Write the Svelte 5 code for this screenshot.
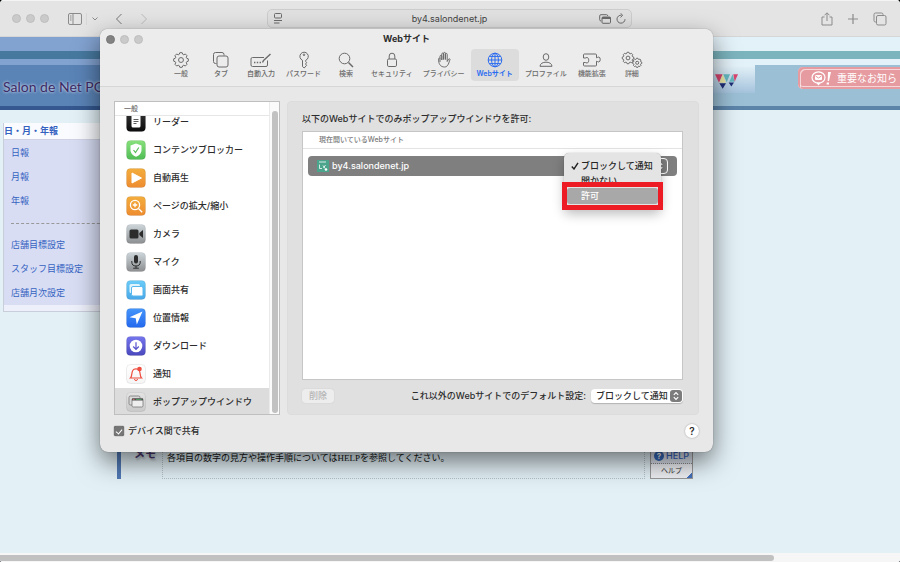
<script>
  function gear(cx, cy, r, teeth) {
    let pts = [];
    for (let i = 0; i < teeth; i++) {
      const a = (Math.PI * 2 * i) / teeth - Math.PI / 2;
      const s = Math.PI / teeth;
      for (const [off, rad] of [[-0.8, 0.8], [-0.4, 1], [0.4, 1], [0.8, 0.8]]) {
        pts.push((cx + Math.cos(a + s * off) * r * rad).toFixed(2) + ' ' + (cy + Math.sin(a + s * off) * r * rad).toFixed(2));
      }
    }
    return `<path d="M${pts.join('L')}Z"/><circle cx="${cx}" cy="${cy}" r="${r * 0.33}"/>`;
  }

  const tabs = [
    { label: '一般', w: 18, icon: gear(9, 9, 7.4, 8) },
    { label: 'タブ', w: 18, icon: '<path d="M4.5 12.5H3.5A2 2 0 0 1 1.5 10.500V3.500A2 2 0 0 1 3.500 1.500H10A2 2 0 0 1 12 3.500V4.500"/><rect x="5" y="5" width="11" height="11" rx="2"/>' },
    { label: '自動入力', w: 22, icon: '<path d="M14 6.500H2.500A1.500 1.500 0 0 0 1 8V14A1.500 1.500 0 0 0 2.500 15.500H16A1.500 1.500 0 0 0 17.500 14V9.500"/><path d="M12.500 11.500L13.500 9.500L20.500 3" stroke-width="1.400"/><path d="M4 11.500H12" stroke-dasharray="1.400 1.400" stroke-width="1.500"/>' },
    { label: 'パスワード', w: 18, icon: '<path d="M7.500 9.300A4.200 4.200 0 1 1 10.700 9.300V10.500L11.600 11.700L10.500 13L11.600 14.300L9.200 17L7.500 15.500Z"/><circle cx="9" cy="3.800" r=".8"/>' },
    { label: '検索', w: 18, icon: '<circle cx="7.500" cy="7.500" r="5.300"/><path d="M11.500 11.500L16 16" stroke-width="1.500"/>' },
    { label: 'セキュリティ', w: 18, icon: '<rect x="4.500" y="8" width="9" height="7.500" rx="1.300"/><path d="M6.200 8V5A2.800 2.800 0 0 1 11.800 5V8"/>' },
    { label: 'プライバシー', w: 18, icon: '<path d="M5 11V5.300A.9.9 0 0 1 6.800 5.300V9V3A.9.9 0 0 1 8.600 3V8.500V2.300A.9.9 0 0 1 10.400 2.300V8.500V3.300A.9.9 0 0 1 12.200 3.300V10.500L13.600 8.200C14.300 7.300 15.300 7.800 14.900 8.800C14 11 13.300 16 9.500 16C6 16 3.900 13.500 3.700 10V7.500A.7.7 0 0 1 5 7.500"/>' },
    { label: 'Webサイト', w: 18, active: true, icon: '<circle cx="9" cy="9" r="6.800"/><ellipse cx="9" cy="9" rx="3.400" ry="6.800"/><path d="M9 2.200V15.800M2.200 9H15.800M3.400 5.400H14.600M3.400 12.600H14.600"/>' },
    { label: 'プロファイル', w: 18, icon: '<ellipse cx="9" cy="6" rx="2.800" ry="3.300"/><path d="M3 15.300C3 9.800 15 9.800 15 15.300Z"/>' },
    { label: '機能拡張', w: 20, icon: '<path d="M2.500 3H13.500A1 1 0 0 1 14.500 4V6.800C15.500 6.800 15.700 6 16.800 6C18.700 6 18.700 11 16.800 11C15.700 11 15.500 10.200 14.500 10.200V14A1 1 0 0 1 13.500 15H2.500A1 1 0 0 1 1.500 14V11.500H3.300C4 11.500 4 12 5 12C7.300 12 7.300 6.500 5 6.500C4 6.500 4 7 3.300 7H1.500V4A1 1 0 0 1 2.500 3Z"/>' },
    { label: '詳細', w: 22, icon: gear(7, 7, 5.8, 8) + gear(16.2, 11.8, 4.6, 8) },
  ];

  const items = [
    { label: 'リーダー', c1: '#333', c2: '#0c0c0c', icon: '<rect x="5" y="2" width="9" height="13" rx="1.500" fill="#fff"/><path d="M7 7H12M7 9H12M7 11H10" stroke="#333" stroke-width=".8"/>' },
    { label: 'コンテンツブロッカー', c1: '#88e07c', c2: '#50bd54', icon: '<path d="M9.500 3L15 5V9.500C15 13 12.500 15 9.500 16.300C6.500 15 4 13 4 9.500V5Z" fill="#fff"/><path d="M7 9.500L9 12L12.300 7" fill="none" stroke="#55bd58" stroke-width="1.200"/>' },
    { label: '自動再生', c1: '#f3ad3c', c2: '#ee8c30', icon: '<path d="M5.500 4.500L15 9.500L5.500 14.500Z" fill="#fff" stroke="#fff" stroke-linejoin="round"/>' },
    { label: 'ページの拡大/縮小', c1: '#f3ad3c', c2: '#ee8c30', icon: '<g fill="none" stroke="#fff" stroke-width="1.300"><circle cx="8.500" cy="8.500" r="4.600"/><path d="M12 12L15.700 15.700M8.500 6.300V10.700M6.300 8.500H10.700"/></g>' },
    { label: 'カメラ', c1: '#cdd6db', c2: '#8c8e90', icon: '<rect x="3" y="5" width="9" height="9" rx="1.500" fill="#2c2c2c"/><path d="M12.800 8.500L16.500 5.500V13.500L12.800 10.500Z" fill="#2c2c2c"/>' },
    { label: 'マイク', c1: '#cdd6db', c2: '#8c8e90', icon: '<rect x="7.500" y="2.500" width="4" height="8.500" rx="2" fill="#2c2c2c"/><path d="M5.300 8.500V9.500A4.200 4 0 0 0 13.700 9.500V8.500M9.500 13.500V15.700M6.700 15.700H12.300" fill="none" stroke="#2c2c2c"/>' },
    { label: '画面共有', c1: '#6accf8', c2: '#48a8e8', icon: '<rect x="3" y="3.500" width="10.500" height="9" rx="1.500" fill="#dff3fd"/><rect x="5" y="6" width="11.500" height="9.500" rx="1.500" fill="#fff" stroke="#56b6ee"/>' },
    { label: '位置情報', c1: '#4595fa', c2: '#2368ee', icon: '<path d="M16 3L10.300 16L9.200 9.800L3 8.700Z" fill="#fff"/>' },
    { label: 'ダウンロード', c1: '#7575ee', c2: '#4a48bc', icon: '<circle cx="9.500" cy="9.500" r="6.300" fill="#fff"/><path d="M9.500 5.800V12.500M6.700 10L9.500 12.800L12.300 10" fill="none" stroke="#5552cc" stroke-width="1.200"/>' },
    { label: '通知', c1: '#ffffff', c2: '#f5f5f5', icon: '<path d="M4 13.500H15C13.300 12 14 8 12.800 6C11.500 3.700 7.500 3.700 6.200 6C5 8 5.700 12 4 13.500Z" fill="none" stroke="#ee4d3f" stroke-width="1.200"/><path d="M8 14.500A1.500 1.500 0 0 0 11 14.500" fill="none" stroke="#ee4d3f"/><circle cx="13" cy="4.500" r="2.300" fill="#ee4d3f"/>' },
    { label: 'ポップアップウインドウ', selected: true, c1: '#e3e3e3', c2: '#c9c9c9', icon: '<rect x="2.500" y="3.500" width="11" height="9" rx="1.500" fill="#d9d9d9" stroke="#777" stroke-width=".8"/><rect x="5.500" y="6" width="11" height="8.500" rx="1.200" fill="#eee" stroke="#777" stroke-width=".8"/><path d="M5.500 7H16.500" stroke="#4f4f4f" stroke-width="2"/><path d="M6.300 7H8" stroke="#c66" /><path d="M9.500 7H15" stroke="#4f9662"/>' },
  ];

  const menu = ['日報', '月報', '年報', '-', '店舗目標設定', 'スタッフ目標設定', '店舗月次設定'];
  let share = $state(true);
  let rule = $state('ブロックして通知');
</script>

{#snippet updown()}
  <svg class="updown" viewBox="0 0 12 12" aria-hidden="true">
    <rect width="12" height="12" rx="3" fill="#7c7c7c" />
    <path d="M3.800 4.800L6 2.600L8.200 4.800M3.800 7.200L6 9.400L8.200 7.200" fill="none" stroke="#fff" stroke-width="1.200" />
  </svg>
{/snippet}

<div class="browser">
  <header class="bar">
    <div class="left">
      <span class="lights"><i></i><i></i><i></i></span>
      <button class="side" aria-label="サイドバー">
        <svg width="14" height="12" viewBox="0 0 14 12"><rect x=".5" y=".5" width="13" height="11" rx="1.500" /><path d="M5 .5V11.500M2 3H3.500M2 5H3.500M2 7H3.500" /></svg>
      </button>
      <button class="more" aria-label="タブグループ"><svg width="6" height="4" viewBox="0 0 6 4"><path d="M.5 .5L3 3L5.500 .5" /></svg></button>
      <button class="back" aria-label="戻る"><svg width="8" height="12" viewBox="0 0 8 12"><path d="M6.500 1L1.500 6L6.500 11" stroke="#777" /></svg></button>
      <button aria-label="進む"><svg width="8" height="12" viewBox="0 0 8 12"><path d="M1.500 1L6.500 6L1.500 11" stroke="#bbb" /></svg></button>
    </div>
    <div class="address">
      <svg width="10" height="11" viewBox="0 0 10 11"><rect x="1.500" y=".5" width="7" height="4.500" rx="1" /><path d="M1 7.500H9M1 10H6.500" /></svg>
      <span>by4.salondenet.jp</span>
      <svg width="12" height="10" viewBox="0 0 12 10"><path d="M2 7A1.300 1.300 0 0 1 .7 5.700V2A1.300 1.300 0 0 1 2 .7H7.500A1.300 1.300 0 0 1 8.800 2" /><rect x="3" y="3" width="8.500" height="6.300" rx="1" /><path d="M3 4H11.500" stroke-width="2" /></svg>
      <svg width="10" height="11" viewBox="0 0 10 11"><path d="M5.500 2.200A4 4 0 1 0 9 6.200M4.500 .2L6.700 2.300L4.500 4.400" /></svg>
    </div>
    <div class="right">
      <button aria-label="共有"><svg width="12" height="14" viewBox="0 0 12 14"><path d="M3.500 5H1V13H11V5H8.500M6 9V1M3.500 3.300L6 .8L8.500 3.300" /></svg></button>
      <button aria-label="新規タブ"><svg width="12" height="12" viewBox="0 0 12 12"><path d="M6 1V11M1 6H11" stroke-width="1.200" /></svg></button>
      <button aria-label="タブ一覧"><svg width="14" height="14" viewBox="0 0 14 14"><path d="M3.500 10H2.500A1.500 1.500 0 0 1 1 8.500V2.500A1.500 1.500 0 0 1 2.500 1H8.500A1.500 1.500 0 0 1 10 2.500V3.500" /><rect x="3.500" y="3.500" width="9.500" height="9.500" rx="1.500" /></svg></button>
    </div>
  </header>

  <main class="site">
    <div class="banner">
      <div class="brand">Salon de Net POS</div>
      <div class="promo">
        <div class="logo">
          <svg width="23" height="15" viewBox="0 0 69 44">
            <path d="M0 0H23L12 26Z" fill="#d8456f" /><path d="M23 0L33 26H13Z" fill="#ece9a4" /><path d="M13 27H33L23 44Z" fill="#1f2f78" />
            <path d="M25 0H45L35 24Z" fill="#65b8bf" /><path d="M53 0L59 23H43Z" fill="#65b8bf" /><path d="M41 25H57L49 37Z" fill="#1f2f78" /><path d="M55 0H69L59 23Z" fill="#d8456f" />
          </svg>
        </div>
        <a class="notice" href="#news">
          <svg width="21" height="15" viewBox="0 0 21 15"><ellipse cx="7.500" cy="6.500" rx="6.500" ry="5.700" fill="none" stroke="#fff" stroke-width="1.200" /><path d="M5 11.500L7.500 14.500L10 11.500" fill="#fff" /><rect x="4" y="4" width="7" height="5" rx="1" fill="#fff" /><path d="M4.500 5L7.500 7L10.500 5" fill="none" stroke="#e69ba0" /><path d="M17 1H20L18 10H16.700ZM15.800 11.500H18V13.500H15.500Z" fill="#fff" /></svg>
          重要なお知ら
        </a>
      </div>
    </div>

    <nav class="menu">
      <h2>日・月・年報</h2>
      <ul>
        {#each menu as m}
          {#if m == '-'}
            <li class="dash"></li>
          {:else}
            <li><a href="#menu">{m}</a></li>
          {/if}
        {/each}
      </ul>
    </nav>

    <section class="memo">
      <h3>メモ</h3>
      <p>各項目の数字の見方や操作手順についてはHELPを参照してください。</p>
      <a class="help" href="#help">
        <b><i>?</i>HELP</b>
        <span>ヘルプ</span>
      </a>
    </section>
  </main>
  <div class="hscroll"><div></div></div>

  <div class="dialog" role="dialog" aria-labelledby="title">
    <div class="titlebar">
      <span class="lights"><i class="on"></i><i></i><i></i></span>
      <h1 id="title">Webサイト</h1>
    </div>
    <div class="tabs">
      {#each tabs as t}
        <button class="tab" class:active={t.active}>
          <svg width={t.w} height="18" viewBox="0 0 {t.w} 18">{@html t.icon}</svg>
          <span>{t.label}</span>
        </button>
      {/each}
    </div>

    <div class="content">
      <div class="list">
        <div class="names">
          <h2>一般</h2>
          <div class="clip">
            <ul>
              {#each items as item, i}
                <li class:selected={item.selected}>
                  <svg width="20" height="20" viewBox="-0.5 -0.5 20 20">
                    <defs><linearGradient id="g{i}" x2="0" y2="1"><stop stop-color={item.c1} /><stop offset="1" stop-color={item.c2} /></linearGradient></defs>
                    <rect width="19" height="19" rx="4" fill="url(#g{i})" stroke="#0002" stroke-width=".5" />
                    {@html item.icon}
                  </svg>
                  {item.label}
                </li>
              {/each}
            </ul>
          </div>
        </div>
        <div class="track"><div></div></div>
      </div>

      <div class="panel">
        <p>以下のWebサイトでのみポップアップウインドウを許可:</p>
        <div class="sites">
          <h3>現在開いているWebサイト</h3>
          <div class="site-row">
            <svg width="12" height="12" viewBox="0 0 12 12"><rect width="12" height="12" fill="#4aa58c" /><path d="M2 2H9M2.500 4.500V8.500H5M6 5.500L8 8.500M8.500 5L6.500 8" stroke="#e6f5f0" fill="none" stroke-width=".9" /><circle cx="9" cy="9.500" r="1.300" fill="#fff" /></svg>
            <span>by4.salondenet.jp</span>
            <button class="ring" aria-label="設定を変更">{@render updown()}</button>
            <div class="popup" role="listbox" aria-label="ポップアップ">
              <button role="option" aria-selected="true"><svg width="8" height="8" viewBox="0 0 8 8"><path d="M.8 4.500L3 7L7 .8" fill="none" stroke="#222" stroke-width="1.400" /></svg>ブロックして通知</button>
              <button role="option" aria-selected="false">開かない</button>
              <button role="option" aria-selected="false" class="hover">許可</button>
              <div class="frame"></div>
            </div>
          </div>
        </div>
        <div class="actions">
          <button class="delete" disabled>削除</button>
          <label for="rule">これ以外のWebサイトでのデフォルト設定:</label>
          <div class="select">
            <select id="rule" bind:value={rule}>
              <option>ブロックして通知</option>
              <option>開かない</option>
              <option>許可</option>
            </select>
            {@render updown()}
          </div>
        </div>
      </div>
    </div>

    <div class="foot">
      <label><input type="checkbox" bind:checked={share} />デバイス間で共有</label>
      <button class="q" aria-label="ヘルプ">?</button>
    </div>
  </div>
</div>

<style>
  :global(body) {
    margin: 0;
    background: #000;
  }
  .browser {
    position: relative;
    display: flex;
    flex-direction: column;
    min-height: 100vh;
    overflow: hidden;
    border-radius: 4px 4px 2px 2px;
    background: #e3f1f7;
    color: #2c2c2c;
    font: 9px/12px Inter, "Noto Sans CJK JP", sans-serif;
  }
  * {
    box-sizing: border-box;
  }
  h1, h2, h3, p, ul {
    margin: 0;
    padding: 0;
    font-size: 9px;
    list-style: none;
  }
  button {
    padding: 0;
    border: 0;
    background: none;
    color: inherit;
    font: inherit;
  }
  a {
    color: #3562c0;
    text-decoration: none;
  }
  svg {
    display: block;
    flex: none;
  }
  .lights {
    display: flex;
    gap: 5px;
  }
  .lights i {
    width: 9px;
    height: 9px;
    border-radius: 50%;
    background: #cacaca;
    border: 1px solid #bebebe;
  }
  .lights .on {
    background: #828282;
    border-color: #787878;
  }

  /* browser toolbar */
  .bar {
    display: grid;
    grid-template-columns: 1fr minmax(0, 365px) 1fr;
    align-items: center;
    height: 37px;
    padding: 0 13px 0 12px;
    background: #e4e4e4;
    border-top: 1px solid #f4f4f4;
    border-bottom: 1px solid #d6d6d6;
  }
  .bar svg {
    fill: none;
    stroke: #8b8b8b;
  }
  .left {
    display: flex;
    align-items: center;
  }
  .side {
    margin-left: 19px;
    padding-right: 4px;
    border-right: 1px solid #d8d8d8;
  }
  .more {
    margin-left: 5px;
  }
  .back {
    margin: 0 17px 0 17px;
  }
  .address {
    display: flex;
    align-items: center;
    gap: 5px;
    height: 19px;
    padding: 0 5px;
    border: 1px solid #cdcdcd;
    border-radius: 5px;
    background: #e0e0e0;
  }
  .address svg {
    stroke: #6b6b6b;
  }
  .address span {
    flex: 1;
    text-align: center;
    padding-left: 17px;
    color: #444;
  }
  .right {
    display: flex;
    justify-content: flex-end;
    align-items: center;
    gap: 14px;
  }

  /* web page */
  .site {
    display: flex;
    flex-direction: column;
    flex: 1;
  }
  .banner {
    display: grid;
    grid-template-columns: 1fr 1fr;
    height: 73px;
  }
  .brand {
    padding: 36px 0 0 3px;
    background: linear-gradient(#82a2d0 14px, #47799f 14px 22px, #82a2d0 22px 28px, #5a83b6 28px 69px, #34588f 69px);
    color: #3c2a66;
    font: 14px/28px Lato, sans-serif;
    text-shadow: 0 0 3px #fff;
    white-space: nowrap;
    overflow: hidden;
  }
  .promo {
    display: flex;
    justify-content: flex-end;
    align-items: flex-start;
    overflow: hidden;
    background: linear-gradient(#e3f1f8 14px, #7cb4be 14px 22px, #e3f1f8 22px 28px, #9bbfd5 28px 69px, #5c84a9 69px);
  }
  .logo {
    width: 60px;
    height: 34px;
    margin: 22px 43px 0 0;
    padding: 15px 0 0 20px;
    background: linear-gradient(#e3f1f8 20%, #a4c2dc);
  }
  .notice {
    display: flex;
    align-items: center;
    gap: 5px;
    width: 102px;
    height: 22px;
    margin-top: 30px;
    padding-left: 13px;
    overflow: hidden;
    border-radius: 5px 0 0 5px;
    background: #e69ba0;
    box-shadow: inset 2px 2px #e69ba0, inset 3px 3px #fff9, inset 0 -2px #e69ba0, inset 0 -3px #fff9;
    color: #fff;
    font-size: 10px;
    white-space: nowrap;
  }
  .menu {
    width: 120px;
    margin: 13px 0 0 3px;
    padding-bottom: 6px;
    border: 1px solid #c9cedb;
    border-top: 0;
    background: #edeffa;
  }
  .menu h2 {
    height: 17px;
    border-bottom: 1px solid #cfd3e4;
    background: #f9fbfe;
    color: #3562c0;
    line-height: 16px;
  }
  .menu ul {
    padding: 1px 7px 0;
    background: #d8ddf4;
  }
  .menu li {
    height: 24px;
    line-height: 24px;
  }
  .menu .dash {
    height: 20px;
    display: flex;
    align-items: center;
  }
  .dash::before {
    content: "";
    flex: 1;
    border-top: 1px dashed #999;
  }
  .memo {
    display: flex;
    width: 576px;
    height: 50px;
    margin: auto 0 74px 117px;
    border-left: 4px solid #5179b5;
    align-items: stretch;
  }
  .memo h3 {
    width: 41px;
    padding: 19px 0 0 13px;
    color: #4c3a70;
    font-size: 11px;
    text-shadow: 1px 2px 2px #8888;
  }
  .memo p {
    flex: 1;
    padding: 22px 4px 0;
    border: 1px dotted #b5c0c6;
    color: #111;
    font: 9px/12px "Liberation Serif", "Noto Sans CJK JP", serif;
  }
  .help {
    display: flex;
    flex-direction: column;
    justify-content: flex-end;
    width: 43px;
    margin-left: 5px;
    border: 1px solid #999;
    background: linear-gradient(315deg, #4472bd 4px, #eef0f4 4px);
    text-align: center;
  }
  .help b {
    display: flex;
    align-items: center;
    justify-content: center;
    gap: 2px;
    height: 16px;
    background: #d9dee8;
    border-bottom: 1px dotted #888;
    font-weight: 500;
  }
  .help i {
    width: 10px;
    border-radius: 50%;
    background: #3568b8;
    color: #fff;
    font: bold 8px/10px Inter, sans-serif;
  }
  .help span {
    color: #333;
    font-size: 7px;
    line-height: 14px;
  }
  .hscroll {
    height: 9px;
    padding: 2px 0 1px;
    background: #f6f6f6;
  }
  .hscroll div {
    width: 86%;
    height: 6px;
    border-radius: 0 3px 3px 0;
    background: #c1c1c1;
  }

  /* settings window */
  .dialog {
    position: absolute;
    top: 29px;
    left: 100px;
    right: 187px;
    border-radius: 8px;
    background: #e8e8e8;
    box-shadow: 0 0 1px #0008, 0 10px 26px #0008;
    overflow: clip;
  }
  .titlebar {
    display: grid;
    grid-template-columns: 1fr auto 1fr;
    align-items: center;
    height: 20px;
    padding: 0 6px;
    background: #ececec;
  }
  .titlebar h1 {
    font-weight: 700;
  }
  .tabs {
    display: flex;
    justify-content: center;
    gap: 2px;
    padding-bottom: 5px;
    border-bottom: 1px solid #d6d6d6;
    background: #ececec;
  }
  .tab {
    display: flex;
    flex-direction: column;
    align-items: center;
    min-width: 38px;
    padding: 2px 4px;
    border-radius: 4px;
    color: #6a6a6a;
    font-size: 7px;
    font-weight: 500;
    line-height: 10px;
    white-space: nowrap;
  }
  .tab svg {
    fill: none;
    stroke: currentColor;
    stroke-linejoin: round;
  }
  .active {
    padding: 2px 6px;
    background: #dcdcdc;
    color: #2b6cf0;
    font-weight: 600;
  }
  .content {
    display: flex;
    gap: 7px;
    padding: 14px 14px 0;
  }
  .list {
    display: flex;
    width: 166px;
    border: 1px solid #bfbfbf;
    background: #fff;
  }
  .names {
    flex: 1;
  }
  .names h2 {
    height: 14px;
    padding-left: 9px;
    border-bottom: 1px solid #e6e6e6;
    color: #666;
    font-size: 7px;
    font-weight: 500;
    line-height: 14px;
  }
  .clip {
    overflow: hidden;
  }
  .clip ul {
    margin: -8px 0 -2px;
  }
  .clip li {
    display: flex;
    align-items: center;
    gap: 7px;
    height: 28px;
    padding-left: 11px;
    font-weight: 500;
    white-space: nowrap;
  }
  .clip .selected {
    background: #dcdcdc;
  }
  .track {
    width: 10px;
    padding: 9px 1px 1px 2px;
    border-left: 1px solid #eaeaea;
    background: #fafafa;
  }
  .track div {
    height: 100%;
    border-radius: 3px;
    background: #c1c1c1;
  }
  .panel {
    display: flex;
    flex-direction: column;
    flex: 1;
    padding: 11px 15px 11px 14px;
    border-radius: 4px;
    border: 1px solid #dcdcdc;
    background: #e0e0e0;
    font-weight: 500;
  }
  .sites {
    flex: 1;
    margin: 6px 0 9px;
    border: 1px solid #c6c6c6;
    background: #fff;
  }
  .sites h3 {
    padding-left: 16px;
    border-bottom: 1px solid #e3e3e3;
    color: #7a7a7a;
    font-size: 7px;
    font-weight: 500;
    line-height: 16px;
  }
  .site-row {
    position: relative;
    display: flex;
    align-items: center;
    gap: 3px;
    height: 20px;
    margin: 7px 5px;
    padding: 0 9px;
    border-radius: 4px;
    background: #7f7f7f;
    color: #fff;
  }
  .site-row span {
    flex: 1;
  }
  .ring {
    padding: 1px;
    border: 1px solid #fff;
    border-radius: 4px;
  }
  .updown {
    width: 12px;
    height: 12px;
  }
  .popup {
    position: absolute;
    top: -3px;
    right: 16px;
    width: 97px;
    padding: 5px 3px;
    border-radius: 5px;
    background: #e4e4e4;
    box-shadow: 0 0 1px #0006, 0 5px 12px #0004;
    color: #262626;
  }
  .popup button {
    display: flex;
    align-items: center;
    gap: 2px;
    width: 100%;
    height: 15px;
    padding-left: 14px;
    border-radius: 3px;
  }
  .popup button:first-child {
    padding-left: 4px;
  }
  .popup .hover {
    height: 16px;
    background: #a8a8a8;
    color: #fff;
  }
  .frame {
    position: absolute;
    inset: 29px -2px -1px;
    border: 5px solid #ed1c24;
  }
  .actions {
    display: flex;
    align-items: center;
    gap: 5px;
  }
  .actions label {
    margin-left: auto;
    white-space: nowrap;
  }
  .delete {
    width: 32px;
    height: 14px;
    border-radius: 3px;
    background: #ededed;
    box-shadow: 0 0 1px #0003;
    color: #b5b5b5;
  }
  .select {
    display: grid;
    align-items: center;
    justify-items: end;
    width: 92px;
  }
  .select > :global(*) {
    grid-area: 1 / 1;
  }
  .select :global(svg) {
    margin-right: 1px;
    pointer-events: none;
  }
  select {
    appearance: none;
    width: 100%;
    height: 14px;
    padding: 0 0 0 5px;
    border: 0;
    border-radius: 4px;
    background: #fff;
    box-shadow: 0 1px 1px #0003;
    color: inherit;
    font: inherit;
  }
  .foot {
    display: flex;
    align-items: center;
    justify-content: space-between;
    padding: 9px 14px 14px;
    font-weight: 500;
  }
  .foot label {
    display: flex;
    align-items: center;
    gap: 4px;
  }
  input {
    appearance: none;
    width: 10px;
    height: 10px;
    margin: 0;
    border-radius: 2px;
    background: #fff;
    box-shadow: 0 0 1px #000;
  }
  input:checked {
    display: grid;
    place-items: center;
    background: #757575;
  }
  input:checked::before {
    content: "";
    width: 3px;
    height: 5px;
    border: solid #fff;
    border-width: 0 1px 1px 0;
    transform: rotate(40deg);
  }
  .q {
    width: 14px;
    height: 14px;
    border-radius: 50%;
    background: #fff;
    box-shadow: 0 0 2px #0005;
    font-size: 10px;
    font-weight: 600;
    line-height: 14px;
  }
</style>
